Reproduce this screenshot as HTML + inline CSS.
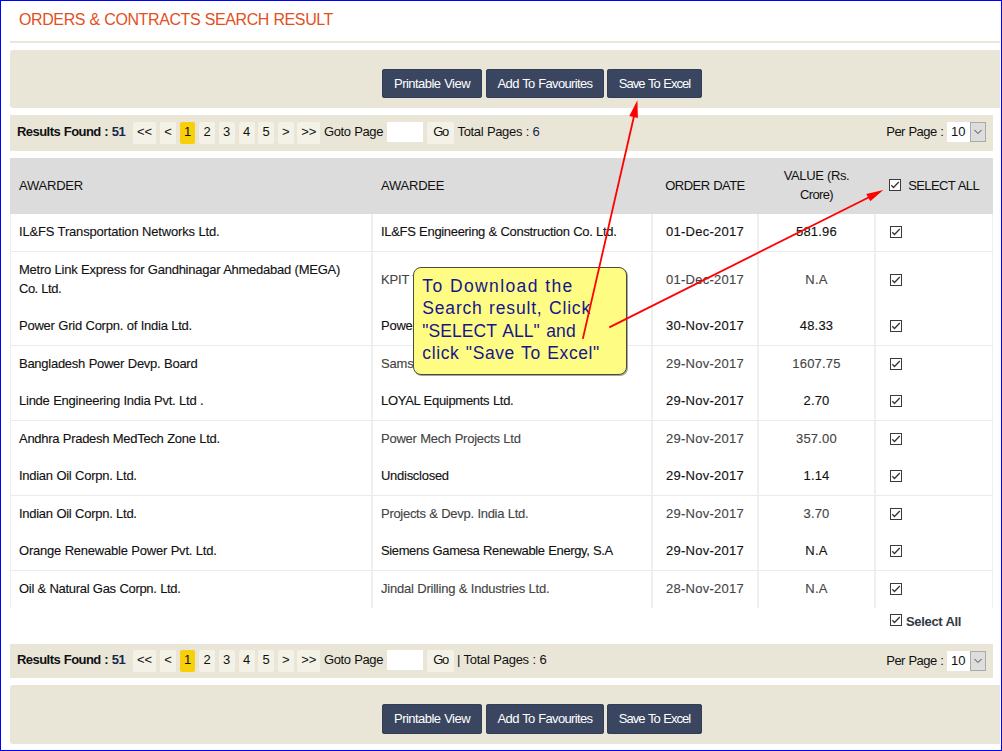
<!DOCTYPE html>
<html><head><meta charset="utf-8"><title>Orders &amp; Contracts Search Result</title>
<style>
html,body{margin:0;padding:0}
body{width:1002px;height:751px;overflow:hidden;background:#fff;font-family:"Liberation Sans",sans-serif;font-size:13px;color:#111;position:relative}
#frame{position:absolute;left:0;top:0;width:1000px;height:749px;border:1px solid #0000ff;z-index:50;pointer-events:none}
h1{position:absolute;left:19px;top:10px;margin:0;font-size:16px;font-weight:normal;color:#e2501c;line-height:20px;white-space:nowrap}
.hr{position:absolute;left:10px;top:41px;width:990px;height:2px;background:#e9e7da}
.pn{position:absolute;left:10px;width:990px;height:58px;background:#e9e6d7;border-radius:3px 0 0 3px}
.bt{position:absolute;top:19px;height:29px;line-height:30px;background:#3a465f;color:#fff;border-radius:3px;text-align:center;white-space:nowrap;box-shadow:inset 0 0 0 1px #323d57}
.pg{position:absolute;left:10px;width:983px;height:36px;background:#e9e6d7;line-height:36px;white-space:nowrap}
.pgi{position:absolute;left:0;width:983px;height:36px}
.pg .rf{position:absolute;left:7px;top:-1px}
.nv{color:#17284d}
.pb{position:absolute;top:7px;height:22px;line-height:20px;background:#f4f2e7;border-radius:2px;text-align:center;color:#111}
.pb.on{background:#f9cf0a}
.ab{position:absolute;top:-1px}
.inp{position:absolute;top:7px;width:36px;height:20px;background:#fff}
.sel{position:absolute;left:937px;top:7px;width:39px;height:20px;background:#fff}
.sel .sv{position:absolute;left:4px;top:0;line-height:20px}
.sel .sa{position:absolute;left:23px;top:0;width:14px;height:18px;border:1px solid #a9a9a9;background:#dddddd}
.sel .sa svg{display:block}
table{position:absolute;left:10px;top:158px;width:983px;border-collapse:separate;border-spacing:0;table-layout:fixed}
th{background:#dcdcdc;font-weight:normal;height:56px;padding:0 0 2px 9px;text-align:left;line-height:19px;vertical-align:middle;color:#111;box-sizing:border-box}
td{-webkit-text-stroke:0.12px;padding:8px 0 10px 8px;line-height:19px;border-left:1px solid #efefef;border-right:1px solid #efefef;vertical-align:middle;color:#111;height:19px}
tr.o td{border-bottom:1px solid #ebebeb}
tr.e td.g{color:#444}
th.c,td.c{text-align:center;padding-left:0}
td.k{padding-left:14px}th.k{padding-left:14px}th .cb{vertical-align:-1px}
.cb{vertical-align:-2px}
.sall{position:absolute;left:890px;top:611px;font-weight:bold;line-height:20px;white-space:nowrap;color:#333845}
.sall .cb{margin-right:4px;position:relative;top:-1px}
.sall span{position:relative;top:1px}
#call{position:absolute;left:413px;top:267px;width:212px;height:106px;background:#fffc84;border:1px solid #4a4a3a;border-radius:8px;box-shadow:1px 1px 0 rgba(60,60,40,0.45);z-index:10;color:#16168c;font-size:17.5px;line-height:22.4px}
#call div{position:absolute;left:8.3px;white-space:nowrap}
#arrows{position:absolute;left:0;top:0;z-index:20}
</style></head><body>
<div id="frame"></div>
<h1><span style="letter-spacing:-0.396px;word-spacing:0.396px">ORDERS &amp; CONTRACTS SEARCH RESULT</span></h1>
<div class="hr"></div>
<div class="pn" style="top:50px;height:58px"><span class="bt" style="left:372px;width:100px;height:29px"><span style="letter-spacing:-0.529px;word-spacing:0.529px">Printable View</span></span><span class="bt" style="left:476px;width:118px;height:29px"><span style="letter-spacing:-0.650px;word-spacing:0.650px">Add To Favourites</span></span><span class="bt" style="left:597px;width:95px;height:29px"><span style="letter-spacing:-0.986px;word-spacing:0.986px">Save To Excel</span></span></div>
<div class="pg" style="top:115px;height:36px"><div class="pgi" style="top:0px"><span class="rf"><b><span style="letter-spacing:-0.548px;word-spacing:0.548px">Results Found : </span></b><b class="nv"><span style="letter-spacing:-0.362px">51</span></b></span><span class="pb" style="left:123px;width:23px">&lt;&lt;</span><span class="pb" style="left:150px;width:16px">&lt;</span><span class="pb on" style="left:170px;width:15px">1</span><span class="pb" style="left:189px;width:16px">2</span><span class="pb" style="left:208.5px;width:16px">3</span><span class="pb" style="left:228.5px;width:16px">4</span><span class="pb" style="left:248.2px;width:15.8px">5</span><span class="pb" style="left:268px;width:15.5px">&gt;</span><span class="pb" style="left:287.3px;width:23px">&gt;&gt;</span><span class="ab" style="left:314px"><span style="letter-spacing:-0.395px;word-spacing:0.395px">Goto Page</span></span><span class="inp" style="left:377px"></span><span class="pb" style="left:417px;width:27px"><span style="letter-spacing:-1.322px">Go</span></span><span class="ab" style="left:447.5px"><span style="letter-spacing:-0.337px;word-spacing:0.337px">Total Pages : </span><span class="nv">6</span></span><span class="ab" style="left:876.3px;top:-1px"><span style="letter-spacing:-0.555px;word-spacing:0.555px">Per Page :</span></span><span class="sel" style="top:7px"><span class="sv">10</span><span class="sa"><svg width="14" height="18" viewBox="0 0 14 18"><path d="M3.5 7 L7 10.5 L10.5 7" fill="none" stroke="#444" stroke-width="1"/></svg></span></span></div></div>
<table>
<colgroup><col style="width:362px"><col style="width:280px"><col style="width:106px"><col style="width:117px"><col style="width:118px"></colgroup>
<tr><th><span style="letter-spacing:-0.212px">AWARDER</span></th><th><span style="letter-spacing:-0.213px">AWARDEE</span></th><th class="c"><span style="letter-spacing:-0.530px;word-spacing:0.530px">ORDER DATE</span></th><th class="c"><span style="letter-spacing:-0.412px;word-spacing:0.412px">VALUE (Rs.</span><br><span style="letter-spacing:-0.624px">Crore)</span></th><th class="k"><svg class="cb" width="12" height="12" viewBox="0 0 12 12"><rect x="0.5" y="0.5" width="11" height="11" fill="#fff" stroke="#3a3a3a"/><path d="M2.3 6.2 L4.5 8.5 L9.8 3" fill="none" stroke="#333" stroke-width="1.25"/></svg>&nbsp; <span style="letter-spacing:-0.619px;word-spacing:0.619px">SELECT ALL</span></th></tr>
<tr class="o"><td><span style="letter-spacing:-0.179px;word-spacing:0.179px">IL&amp;FS Transportation Networks Ltd.</span></td><td class="g"><span style="letter-spacing:-0.323px;word-spacing:0.323px">IL&amp;FS Engineering &amp; Construction Co. Ltd.</span></td><td class="c g"><span style="letter-spacing:0.240px">01-Dec-2017</span></td><td class="c g"><span style="letter-spacing:0.199px">581.96</span></td><td class="k"><svg class="cb" width="12" height="12" viewBox="0 0 12 12"><rect x="0.5" y="0.5" width="11" height="11" fill="#fff" stroke="#3a3a3a"/><path d="M2.3 6.2 L4.5 8.5 L9.8 3" fill="none" stroke="#333" stroke-width="1.25"/></svg></td></tr>
<tr class="e"><td><span style="letter-spacing:-0.253px;word-spacing:0.253px">Metro Link Express for Gandhinagar Ahmedabad (MEGA)</span><br><span style="letter-spacing:-0.504px;word-spacing:0.504px">Co. Ltd.</span></td><td class="g"><span style="letter-spacing:-0.167px;word-spacing:0.167px">KPIT Technologies Ltd.</span></td><td class="c g"><span style="letter-spacing:0.240px">01-Dec-2017</span></td><td class="c g"><span style="letter-spacing:0.217px">N.A</span></td><td class="k"><svg class="cb" width="12" height="12" viewBox="0 0 12 12"><rect x="0.5" y="0.5" width="11" height="11" fill="#fff" stroke="#3a3a3a"/><path d="M2.3 6.2 L4.5 8.5 L9.8 3" fill="none" stroke="#333" stroke-width="1.25"/></svg></td></tr>
<tr class="o"><td><span style="letter-spacing:-0.239px;word-spacing:0.239px">Power Grid Corpn. of India Ltd.</span></td><td class="g"><span style="letter-spacing:-0.241px;word-spacing:0.241px">Power Mech Projects Ltd</span></td><td class="c g"><span style="letter-spacing:0.240px">30-Nov-2017</span></td><td class="c g"><span style="letter-spacing:0.195px">48.33</span></td><td class="k"><svg class="cb" width="12" height="12" viewBox="0 0 12 12"><rect x="0.5" y="0.5" width="11" height="11" fill="#fff" stroke="#3a3a3a"/><path d="M2.3 6.2 L4.5 8.5 L9.8 3" fill="none" stroke="#333" stroke-width="1.25"/></svg></td></tr>
<tr class="e"><td><span style="letter-spacing:-0.265px;word-spacing:0.265px">Bangladesh Power Devp. Board</span></td><td class="g"><span style="letter-spacing:-0.198px;word-spacing:0.198px">Samsung C&amp;T Corpn.</span></td><td class="c g"><span style="letter-spacing:0.240px">29-Nov-2017</span></td><td class="c g"><span style="letter-spacing:0.201px">1607.75</span></td><td class="k"><svg class="cb" width="12" height="12" viewBox="0 0 12 12"><rect x="0.5" y="0.5" width="11" height="11" fill="#fff" stroke="#3a3a3a"/><path d="M2.3 6.2 L4.5 8.5 L9.8 3" fill="none" stroke="#333" stroke-width="1.25"/></svg></td></tr>
<tr class="o"><td><span style="letter-spacing:-0.246px;word-spacing:0.246px">Linde Engineering India Pvt. Ltd .</span></td><td class="g"><span style="letter-spacing:-0.296px;word-spacing:0.296px">LOYAL Equipments Ltd.</span></td><td class="c g"><span style="letter-spacing:0.240px">29-Nov-2017</span></td><td class="c g"><span style="letter-spacing:0.190px">2.70</span></td><td class="k"><svg class="cb" width="12" height="12" viewBox="0 0 12 12"><rect x="0.5" y="0.5" width="11" height="11" fill="#fff" stroke="#3a3a3a"/><path d="M2.3 6.2 L4.5 8.5 L9.8 3" fill="none" stroke="#333" stroke-width="1.25"/></svg></td></tr>
<tr class="e"><td><span style="letter-spacing:-0.288px;word-spacing:0.288px">Andhra Pradesh MedTech Zone Ltd.</span></td><td class="g"><span style="letter-spacing:-0.241px;word-spacing:0.241px">Power Mech Projects Ltd</span></td><td class="c g"><span style="letter-spacing:0.240px">29-Nov-2017</span></td><td class="c g"><span style="letter-spacing:0.199px">357.00</span></td><td class="k"><svg class="cb" width="12" height="12" viewBox="0 0 12 12"><rect x="0.5" y="0.5" width="11" height="11" fill="#fff" stroke="#3a3a3a"/><path d="M2.3 6.2 L4.5 8.5 L9.8 3" fill="none" stroke="#333" stroke-width="1.25"/></svg></td></tr>
<tr class="o"><td><span style="letter-spacing:-0.272px;word-spacing:0.272px">Indian Oil Corpn. Ltd.</span></td><td class="g"><span style="letter-spacing:-0.275px">Undisclosed</span></td><td class="c g"><span style="letter-spacing:0.240px">29-Nov-2017</span></td><td class="c g"><span style="letter-spacing:0.190px">1.14</span></td><td class="k"><svg class="cb" width="12" height="12" viewBox="0 0 12 12"><rect x="0.5" y="0.5" width="11" height="11" fill="#fff" stroke="#3a3a3a"/><path d="M2.3 6.2 L4.5 8.5 L9.8 3" fill="none" stroke="#333" stroke-width="1.25"/></svg></td></tr>
<tr class="e"><td><span style="letter-spacing:-0.272px;word-spacing:0.272px">Indian Oil Corpn. Ltd.</span></td><td class="g"><span style="letter-spacing:-0.288px;word-spacing:0.288px">Projects &amp; Devp. India Ltd.</span></td><td class="c g"><span style="letter-spacing:0.240px">29-Nov-2017</span></td><td class="c g"><span style="letter-spacing:0.190px">3.70</span></td><td class="k"><svg class="cb" width="12" height="12" viewBox="0 0 12 12"><rect x="0.5" y="0.5" width="11" height="11" fill="#fff" stroke="#3a3a3a"/><path d="M2.3 6.2 L4.5 8.5 L9.8 3" fill="none" stroke="#333" stroke-width="1.25"/></svg></td></tr>
<tr class="o"><td><span style="letter-spacing:-0.221px;word-spacing:0.221px">Orange Renewable Power Pvt. Ltd.</span></td><td class="g"><span style="letter-spacing:-0.378px;word-spacing:0.378px">Siemens Gamesa Renewable Energy, S.A</span></td><td class="c g"><span style="letter-spacing:0.240px">29-Nov-2017</span></td><td class="c g"><span style="letter-spacing:0.217px">N.A</span></td><td class="k"><svg class="cb" width="12" height="12" viewBox="0 0 12 12"><rect x="0.5" y="0.5" width="11" height="11" fill="#fff" stroke="#3a3a3a"/><path d="M2.3 6.2 L4.5 8.5 L9.8 3" fill="none" stroke="#333" stroke-width="1.25"/></svg></td></tr>
<tr class="e"><td><span style="letter-spacing:-0.312px;word-spacing:0.312px">Oil &amp; Natural Gas Corpn. Ltd.</span></td><td class="g"><span style="letter-spacing:-0.223px;word-spacing:0.223px">Jindal Drilling &amp; Industries Ltd.</span></td><td class="c g"><span style="letter-spacing:0.240px">28-Nov-2017</span></td><td class="c g"><span style="letter-spacing:0.217px">N.A</span></td><td class="k"><svg class="cb" width="12" height="12" viewBox="0 0 12 12"><rect x="0.5" y="0.5" width="11" height="11" fill="#fff" stroke="#3a3a3a"/><path d="M2.3 6.2 L4.5 8.5 L9.8 3" fill="none" stroke="#333" stroke-width="1.25"/></svg></td></tr>
</table>
<div class="sall"><svg class="cb" width="12" height="12" viewBox="0 0 12 12"><rect x="0.5" y="0.5" width="11" height="11" fill="#fff" stroke="#3a3a3a"/><path d="M2.3 6.2 L4.5 8.5 L9.8 3" fill="none" stroke="#333" stroke-width="1.25"/></svg><span style="letter-spacing:-0.339px;word-spacing:0.339px">Select All</span></div>
<div class="pg" style="top:644px;height:34px"><div class="pgi" style="top:-1px"><span class="rf"><b><span style="letter-spacing:-0.548px;word-spacing:0.548px">Results Found : </span></b><b class="nv"><span style="letter-spacing:-0.362px">51</span></b></span><span class="pb" style="left:123px;width:23px">&lt;&lt;</span><span class="pb" style="left:150px;width:16px">&lt;</span><span class="pb on" style="left:170px;width:15px">1</span><span class="pb" style="left:189px;width:16px">2</span><span class="pb" style="left:208.5px;width:16px">3</span><span class="pb" style="left:228.5px;width:16px">4</span><span class="pb" style="left:248.2px;width:15.8px">5</span><span class="pb" style="left:268px;width:15.5px">&gt;</span><span class="pb" style="left:287.3px;width:23px">&gt;&gt;</span><span class="ab" style="left:314px"><span style="letter-spacing:-0.395px;word-spacing:0.395px">Goto Page</span></span><span class="inp" style="left:377px"></span><span class="pb" style="left:417px;width:27px"><span style="letter-spacing:-1.322px">Go</span></span><span class="ab" style="left:447px"><span style="letter-spacing:-0.259px;word-spacing:0.259px">| Total Pages : 6</span></span><span class="ab" style="left:876.3px;top:0px"><span style="letter-spacing:-0.555px;word-spacing:0.555px">Per Page :</span></span><span class="sel" style="top:8px"><span class="sv">10</span><span class="sa"><svg width="14" height="18" viewBox="0 0 14 18"><path d="M3.5 7 L7 10.5 L10.5 7" fill="none" stroke="#444" stroke-width="1"/></svg></span></span></div></div>
<div class="pn" style="top:685px;height:59px"><span class="bt" style="left:372px;width:100px;height:30px"><span style="letter-spacing:-0.529px;word-spacing:0.529px">Printable View</span></span><span class="bt" style="left:476px;width:118px;height:30px"><span style="letter-spacing:-0.650px;word-spacing:0.650px">Add To Favourites</span></span><span class="bt" style="left:597px;width:95px;height:30px"><span style="letter-spacing:-0.986px;word-spacing:0.986px">Save To Excel</span></span></div>
<div id="call"><div style="top:7.0px"><span style="letter-spacing:1.371px;word-spacing:0.229px">To Download the</span></div><div style="top:29.4px"><span style="letter-spacing:0.819px;word-spacing:0.781px">Search result, Click</span></div><div style="top:51.8px"><span style="letter-spacing:0.066px;word-spacing:1.534px">&quot;SELECT ALL&quot; and</span></div><div style="top:74.2px"><span style="letter-spacing:0.606px;word-spacing:0.994px">click &quot;Save To Excel&quot;</span></div></div>
<svg id="arrows" width="1002" height="751" viewBox="0 0 1002 751">
<g stroke="#ff0000" stroke-width="1.8" fill="#ff0000">
<line x1="582.8" y1="338.9" x2="634.5" y2="114"/>
<polygon points="637.4,100.3 629.3,115.9 637.9,118" stroke="none"/>
<line x1="609.3" y1="327.4" x2="869" y2="197.2"/>
<polygon points="883.3,190 866.3,193.9 870.3,201.2" stroke="none"/>
</g></svg>
</body></html>
